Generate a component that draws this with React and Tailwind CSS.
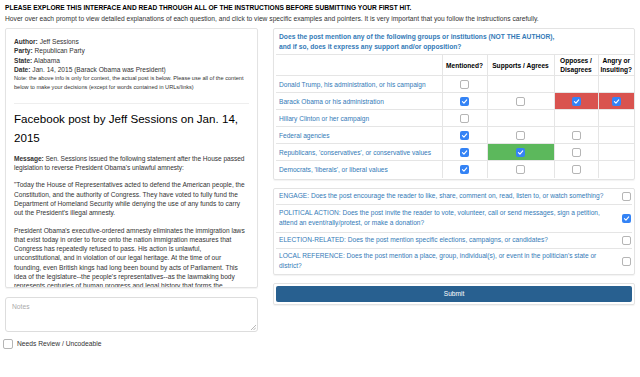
import * as React from "react";

const rows = [
  { label: "Donald Trump, his administration, or his campaign", cells: [false, null, null, null] },
  { label: "Barack Obama or his administration", cells: [true, false, true, true], red: true },
  { label: "Hillary Clinton or her campaign", cells: [false, null, null, null] },
  { label: "Federal agencies", cells: [true, false, false, null] },
  { label: "Republicans, 'conservatives', or conservative values", cells: [true, true, false, null], green: true },
  { label: "Democrats, 'liberals', or liberal values", cells: [true, false, false, null] },
];

const prompts = [
  { text: "ENGAGE: Does the post encourage the reader to like, share, comment on, read, listen to, or watch something?", checked: false },
  { text: "POLITICAL ACTION: Does the post invite the reader to vote, volunteer, call or send messages, sign a petition, attend an event/rally/protest, or make a donation?", checked: true, tall: true },
  { text: "ELECTION-RELATED: Does the post mention specific elections, campaigns, or candidates?", checked: false },
  { text: "LOCAL REFERENCE: Does the post mention a place, group, individual(s), or event in the politician's state or district?", checked: false },
];

function Box({ checked }) {
  if (checked) {
    return (
      <span className="inline-flex w-[9px] h-[9px] rounded-[2px] bg-[#3483f5] items-center justify-center align-middle">
        <svg width="7" height="7" viewBox="0 0 10 10">
          <path d="M2 5.2 L4.2 7.4 L8.2 2.6" stroke="white" strokeWidth="1.6" fill="none" strokeLinecap="round" strokeLinejoin="round" />
        </svg>
      </span>
    );
  }
  return <span className="inline-block w-[9px] h-[9px] rounded-[2px] border border-[#b5b5b5] bg-white align-middle" />;
}

export default function App() {
  return (
    <div className="w-[640px] h-[377px] overflow-hidden bg-white text-[#333] px-[5px] pt-[3px]" style={{ fontFamily: '"Liberation Sans", Arial, sans-serif' }}>
      <div className="text-[6.6px] font-bold leading-[9px] text-black">
        PLEASE EXPLORE THIS INTERFACE AND READ THROUGH ALL OF THE INSTRUCTIONS BEFORE SUBMITTING YOUR FIRST HIT.
      </div>
      <div className="text-[6.7px] leading-[11px] mt-[1px]">
        Hover over each prompt to view detailed explanations of each question, and click to view specific examples and pointers. It is very important that you follow the instructions carefully.
      </div>

      <div className="flex gap-[15px] mt-[4px]">
        {/* left column */}
        <div className="w-[253px] flex flex-col">
          <div className="h-[260px] overflow-hidden border border-[#e3e3e3] rounded-[2px] shadow-[0_1px_1px_rgba(0,0,0,0.05)] px-[8px] pt-[8px] text-[6.6px] leading-[9.3px]">
            <div><b>Author:</b> Jeff Sessions</div>
            <div><b>Party:</b> Republican Party</div>
            <div><b>State:</b> Alabama</div>
            <div><b>Date:</b> Jan. 14, 2015 (Barack Obama was President)</div>
            <div className="text-[5.6px] leading-[9.3px]">
              Note: the above info is only for context, the actual post is below. Please use all of the content below to make your decisions (except for words contained in URLs/links)
            </div>
            <div className="border-t border-[#eee] mt-[10px] pt-[5px]">
              <div className="text-[11.6px] leading-[19px] text-black">Facebook post by Jeff Sessions on Jan. 14, 2015</div>
              <div className="mt-[7px] tracking-[-0.05px]">
                <b>Message:</b> Sen. Sessions issued the following statement after the House passed legislation to reverse President Obama's unlawful amnesty:
              </div>
              <div className="mt-[8px]">
                "Today the House of Representatives acted to defend the American people, the Constitution, and the authority of Congress. They have voted to fully fund the Department of Homeland Security while denying the use of any funds to carry out the President's illegal amnesty.
              </div>
              <div className="mt-[8px]">
                President Obama's executive-ordered amnesty eliminates the immigration laws that exist today in order to force onto the nation immigration measures that Congress has repeatedly refused to pass. His action is unlawful, unconstitutional, and in violation of our legal heritage. At the time of our founding, even British kings had long been bound by acts of Parliament. This idea of the legislature--the people's representatives--as the lawmaking body represents centuries of human progress and legal history that forms the foundational base of our Republic.
              </div>
            </div>
          </div>
          <div className="mt-[9px] h-[35px] border border-[#ddd] rounded-[3px] px-[6px] pt-[4px] text-[6.7px] text-[#aaa] relative">
            Notes
            <svg className="absolute right-[1px] bottom-[1px]" width="5" height="5" viewBox="0 0 5 5">
              <path d="M5 0 L0 5 M5 2.5 L2.5 5" stroke="#999" strokeWidth="0.7" />
            </svg>
          </div>
          <div className="flex items-center gap-[4px] mt-[7px] text-[6.7px] -ml-[2px]">
            <span className="inline-block w-[10px] h-[10px] rounded-[2px] border border-[#b5b5b5] bg-white" />
            Needs Review / Uncodeable
          </div>
        </div>

        {/* right column */}
        <div className="flex-1 flex flex-col">
          <div className="border border-[#e3e3e3] rounded-[2px] shadow-[0_1px_1px_rgba(0,0,0,0.05)] pl-[2px] pt-[2px] pb-[1px]">
            <div className="px-[3px] pt-[1px] pb-[2px] text-[6.7px] leading-[10px] font-bold text-[#337ab7]">
              Does the post mention any of the following groups or institutions (NOT THE AUTHOR),<br />
              and if so, does it express any support and/or opposition?
            </div>
            <table className="w-full border-collapse text-[6.6px]">
              <thead>
                <tr className="border-t border-[#e5e5e5]">
                  <th className="w-[166px] h-[21px] p-0"></th>
                  <th className="w-[45px] p-0 border-l border-[#e5e5e5] font-bold text-black leading-[9px]">Mentioned?</th>
                  <th className="w-[67px] p-0 border-l border-[#e5e5e5] font-bold text-black leading-[9px]">Supports / Agrees</th>
                  <th className="w-[44px] p-0 border-l border-[#e5e5e5] font-bold text-black leading-[9px]">Opposes /<br />Disagrees</th>
                  <th className="p-0 border-l border-[#e5e5e5] font-bold text-black leading-[9px]">Angry or<br />Insulting?</th>
                </tr>
              </thead>
              <tbody>
                {rows.map((r) => (
                  <tr key={r.label} className="border-t border-[#e5e5e5]">
                    <td className="h-[17px] p-0 px-[3px] text-[#337ab7] leading-[9px]">{r.label}</td>
                    {r.cells.map((c, i) => (
                      <td
                        key={i}
                        className={
                          "p-0 border-l border-[#e5e5e5] text-center leading-[0] " +
                          (r.red && i >= 2 ? "bg-[#d9534f]" : r.green && i === 1 ? "bg-[#5cb85c]" : "")
                        }
                      >
                        {c !== null && <Box checked={c} />}
                      </td>
                    ))}
                  </tr>
                ))}
              </tbody>
            </table>
          </div>

          <div className="mt-[8px] border border-[#e3e3e3] rounded-[2px] shadow-[0_1px_1px_rgba(0,0,0,0.05)] px-[2px]">
            {prompts.map((p, i) => (
              <div
                key={i}
                className={
                  "flex items-center justify-between pl-[3px] pr-[1px] " +
                  (p.tall ? "py-[3.5px] " : "py-[2.5px] ") +
                  (i > 0 ? "border-t border-[#e5e5e5]" : "")
                }
              >
                <div className="text-[6.6px] leading-[10px] text-[#337ab7] w-[335px]">{p.text}</div>
                <Box checked={p.checked} />
              </div>
            ))}
          </div>

          <div className="mt-[8px] border border-[#e3e3e3] rounded-[2px] shadow-[0_1px_1px_rgba(0,0,0,0.05)] p-[2px]">
            <div className="h-[16px] rounded-[2px] bg-[#286090] text-white text-[6.6px] flex items-center justify-center">Submit</div>
          </div>
        </div>
      </div>
    </div>
  );
}
